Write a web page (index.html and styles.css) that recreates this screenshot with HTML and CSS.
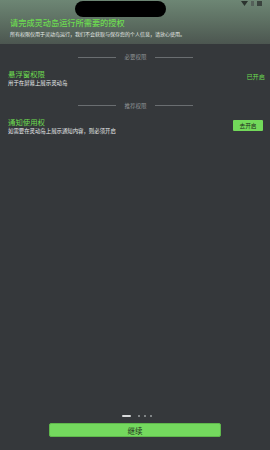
FILE: index.html
```html
<!DOCTYPE html>
<html lang="zh">
<head>
<meta charset="utf-8">
<link rel="stylesheet" href="styles.css">
</head>
<body>
<div class="screen">
  <header class="head">
    <div class="pill"></div>
    <div class="status">
      <svg width="22" height="6" viewBox="0 0 22 6"><path d="M0 0h7L3.5 5z" fill="#2b332e"/><rect x="10" y="0" width="3" height="5" fill="#55605a"/><rect x="16" y="0" width="5" height="5" fill="#3a433e"/></svg>
    </div>
    <h1 class="title">请完成灵动岛运行所需要的授权</h1>
    <p class="sub">所有权限仅用于灵动岛运行，我们不会获取与保存您的个人信息，请放心使用。</p>
  </header>
  <main class="body">
    <div class="divider"><span class="line"></span><span class="dtext">必要权限</span><span class="line"></span></div>
    <div class="perm">
      <div class="pinfo">
        <div class="pname">悬浮窗权限</div>
        <div class="pdesc">用于在屏幕上展示灵动岛</div>
      </div>
      <span class="on">已开启</span>
    </div>
    <div class="divider d2"><span class="line"></span><span class="dtext">推荐权限</span><span class="line"></span></div>
    <div class="perm p2">
      <div class="pinfo">
        <div class="pname">通知使用权</div>
        <div class="pdesc">如需要在灵动岛上展示通知内容，则必须开启</div>
      </div>
      <span class="btn">去开启</span>
    </div>
  </main>
  <footer class="foot">
    <div class="dots"><span class="dash"></span><span class="dot"></span><span class="dot"></span><span class="dot"></span></div>
    <div class="cont">继续</div>
  </footer>
</div>
</body>
</html>
```
FILE: styles.css
```css
* { box-sizing: border-box; margin: 0; padding: 0; }
html, body { width: 270px; height: 450px; overflow: hidden; }
body { background: #35383b; font-family: "Noto Sans CJK SC", "Noto Sans", sans-serif; }
.screen { height: 450px; display: flex; flex-direction: column; }
.head {
  position: relative;
  height: 44px;
  background: linear-gradient(180deg, #6d8674 0%, #5d6f62 50%, #4c5650 100%);
  padding: 16px 10px 0 10px;
}
.pill { position: absolute; left: 75px; top: 1px; width: 91px; height: 16px; background: #000; border-radius: 8px; }
.status { position: absolute; right: 7px; top: 0px; line-height: 0; }
.title { font-size: 8.2px; font-weight: 500; color: #6ddc50; line-height: 13px; }
.sub { font-size: 5px; color: #e6ebe7; line-height: 8px; margin-top: 1px; white-space: nowrap; }
.body { flex: 1; padding: 8px 8px 0 8px; }
.divider { display: flex; align-items: center; justify-content: center; gap: 8px; height: 10px; margin-left: 1px; }
.line { width: 38px; height: 1px; background: #6a6e71; }
.dtext { font-size: 5.5px; color: #8f9396; }
.d2 { margin-top: 13.5px; }
.perm { display: flex; align-items: center; justify-content: space-between; margin-top: 7px; }
.p2 { margin-top: 6.5px; }
.pname { font-size: 7.4px; color: #6ddc50; line-height: 10px; }
.pdesc { font-size: 5.4px; color: #e8ebec; line-height: 8px; }
.on { font-size: 6.2px; color: #6ddc50; margin-right: -3px; margin-top: -4px; }
.btn { background: #72d95a; color: #1f2a1c; font-size: 5.7px; width: 30px; height: 11px; display: flex; align-items: center; justify-content: center; border-radius: 1px; margin-right: -1px; margin-top: -1px; }
.foot { padding: 0 49px 13px 49px; display: flex; flex-direction: column; align-items: center; }
.dots { display: flex; align-items: center; gap: 4px; height: 4px; margin-bottom: 5px; margin-left: 4px; }
.dash { width: 9px; height: 2px; background: #d8dadb; border-radius: 1px; margin-right: 3px; }
.dot { width: 2px; height: 2px; background: #9a9ea0; border-radius: 50%; }
.cont { width: 172px; height: 14px; background: #74d95e; border: 1px solid #5fb84c; border-radius: 2px; color: #1e2a1c; font-size: 7.5px; display: flex; align-items: center; justify-content: center; }
```
